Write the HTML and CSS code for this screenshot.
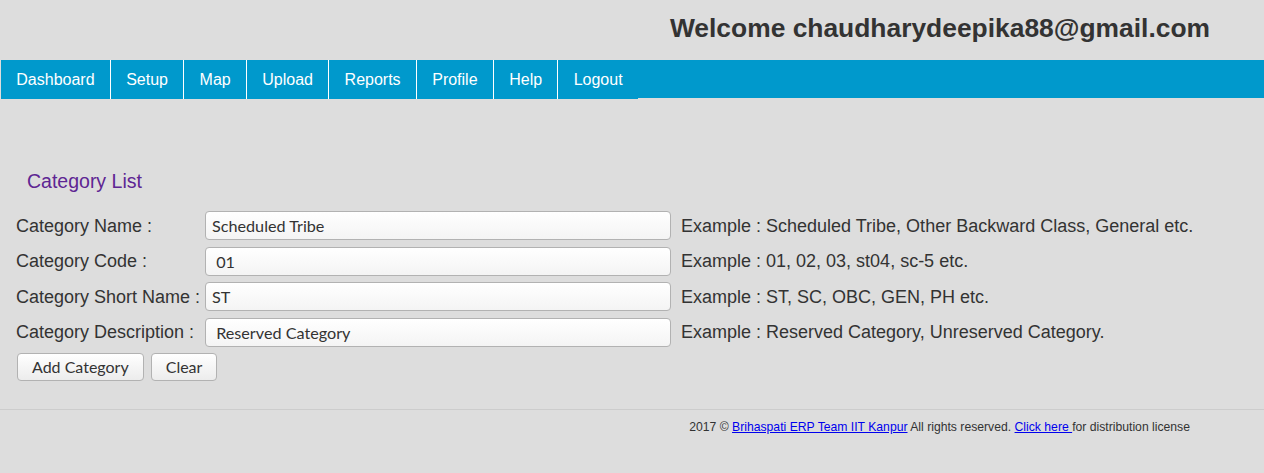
FILE: index.html
```html
<!DOCTYPE html>
<html>
<head>
<meta charset="utf-8">
<title>Category List</title>
<link rel="stylesheet" href="styles.css">
</head>
<body>
<header class="top">
  <h1 class="welcome">Welcome chaudharydeepika88@gmail.com</h1>
</header>
<nav class="menu">
  <ul class="menu-list">
    <li class="menu-item">Dashboard</li>
    <li class="menu-item">Setup</li>
    <li class="menu-item">Map</li>
    <li class="menu-item">Upload</li>
    <li class="menu-item">Reports</li>
    <li class="menu-item">Profile</li>
    <li class="menu-item">Help</li>
    <li class="menu-item">Logout</li>
  </ul>
</nav>
<main class="content">
  <h2 class="title">Category List</h2>
  <form class="form">
    <label class="label">Category Name :</label>
    <input class="field" type="text" value="Scheduled Tribe">
    <span class="example">Example : Scheduled Tribe, Other Backward Class, General etc.</span>

    <label class="label">Category Code :</label>
    <input class="field" type="text" value=" 01">
    <span class="example">Example : 01, 02, 03, st04, sc-5 etc.</span>

    <label class="label">Category Short Name :</label>
    <input class="field" type="text" value="ST">
    <span class="example">Example : ST, SC, OBC, GEN, PH etc.</span>

    <label class="label">Category Description :</label>
    <input class="field" type="text" value=" Reserved Category">
    <span class="example">Example : Reserved Category, Unreserved Category.</span>

    <div class="buttons">
      <button class="btn" type="button">Add Category</button>
      <button class="btn" type="button">Clear</button>
    </div>
  </form>
</main>
<footer class="footer">
  <p class="footer-text">2017 © <a href="#">Brihaspati ERP Team IIT Kanpur</a> All rights reserved. <a href="#">Click here </a>for distribution license</p>
</footer>
</body>
</html>
```

FILE: styles.css
```css
html, body {
  margin: 0;
  padding: 0;
  background: #dddddd;
}
body {
  font-family: "Liberation Sans", Arial, sans-serif;
  color: #333333;
}
.top {
  height: 60px;
  display: flex;
  justify-content: flex-end;
  box-sizing: border-box;
  padding: 13px 54px 0 0;
}
.welcome {
  margin: 0;
  font-size: 26.4px;
  line-height: 30px;
  font-weight: bold;
  color: #333333;
}
.menu {
  margin-left: 1px;
  height: 38px;
  background: #0099cc;
}
.menu-list {
  list-style: none;
  margin: 0;
  padding: 0;
  display: flex;
  width: max-content;
  background: #0099cc;
}
.menu-item {
  height: 39px;
  line-height: 39px;
  padding: 0 15.3px;
  color: #ffffff;
  font-size: 16px;
  border-right: 1px solid #ffffff;
}
.menu-item:last-child {
  border-right: none;
}
.content {
  padding: 71px 0 0 16px;
}
.title {
  margin: 0 0 18px 11px;
  font-size: 19.5px;
  line-height: 24px;
  font-weight: normal;
  color: #5e2593;
}
.form {
  display: grid;
  grid-template-columns: 189px 466px auto;
  row-gap: 6.67px;
  align-items: center;
}
.label {
  padding-top: 1px;
  font-size: 18px;
}
.field {
  box-sizing: border-box;
  width: 466px;
  height: 29px;
  margin: 0;
  padding: 0 6px;
  border: 1px solid #b2b2b2;
  border-radius: 4px;
  background: linear-gradient(#ffffff, #f4f4f4);
  font-family: Lato, "Noto Sans", sans-serif;
  font-size: 16.2px;
  color: #333333;
}
.example {
  margin-left: 10px;
  padding-top: 1px;
  font-size: 18px;
}
.buttons {
  grid-column: 1 / -1;
  display: flex;
  gap: 7px;
  padding-left: 1px;
  margin-top: -1px;
}
.btn {
  height: 28px;
  padding: 0 14px;
  border: 1px solid #b2b2b2;
  border-radius: 4px;
  background: linear-gradient(#ffffff, #ececec);
  font-family: Lato, "Noto Sans", sans-serif;
  font-size: 16px;
  color: #333333;
}
.footer {
  margin-top: 28px;
  border-top: 1px solid #cccccc;
}
.footer-text {
  margin: 10px 0 0 0;
  padding-right: 74px;
  text-align: right;
  font-size: 12.2px;
  color: #333333;
}
.footer-text a {
  color: #0000ee;
}
```
